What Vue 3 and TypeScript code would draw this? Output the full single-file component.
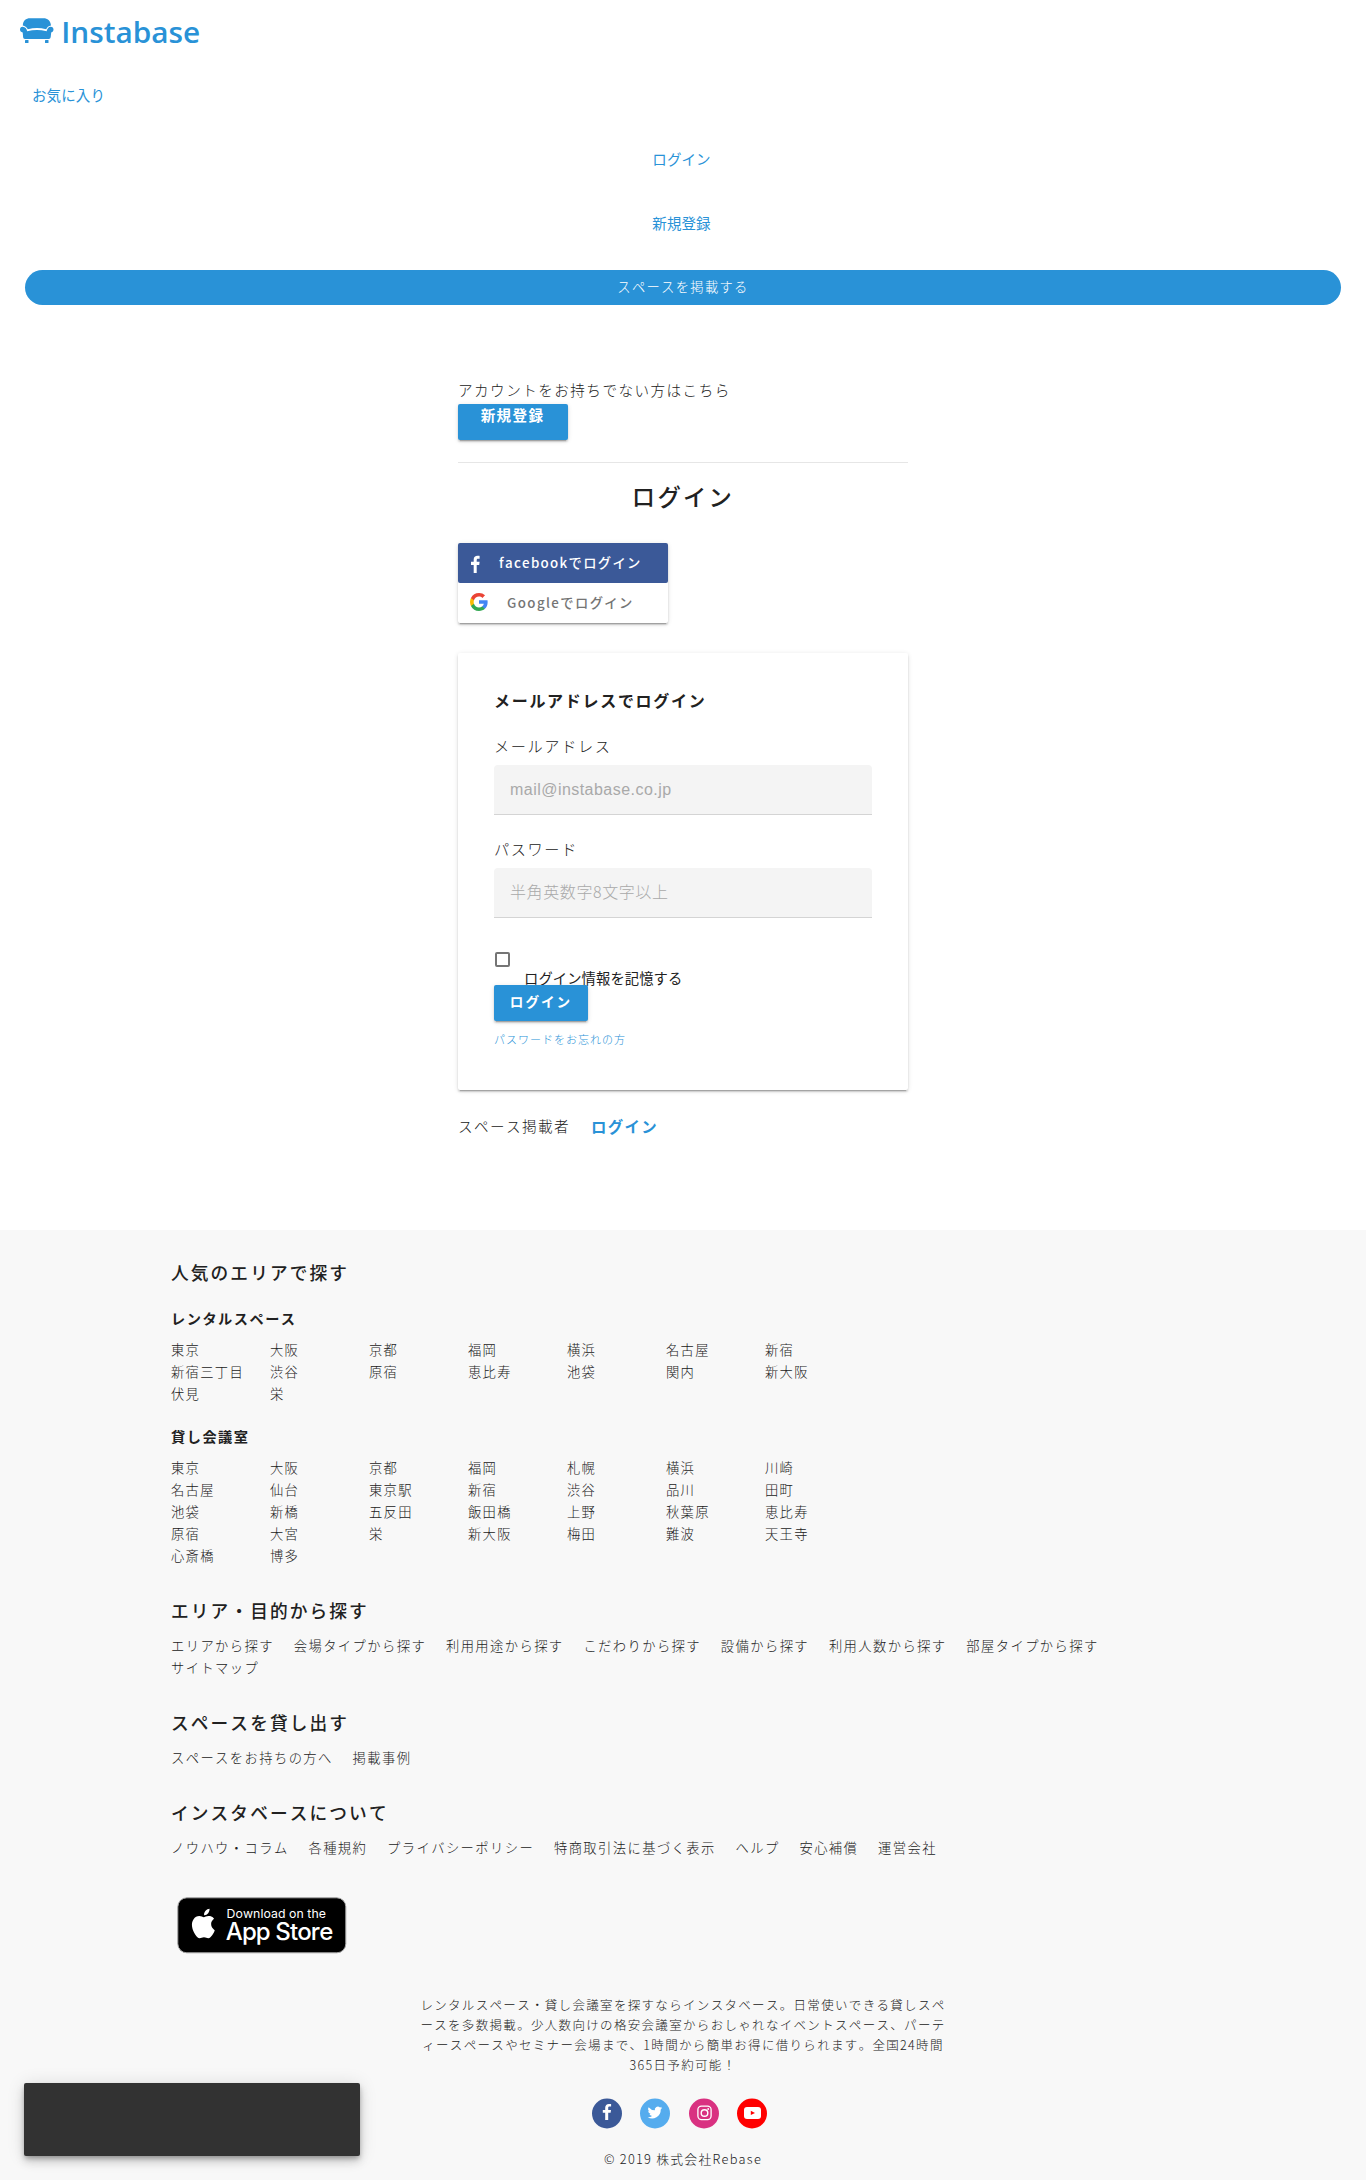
<script setup lang="ts">
interface AreaGroup { title: string; areas: string[] }
interface LinkGroup { title: string; links: string[] }

const areaGroups: AreaGroup[] = [
  {
    title: 'レンタルスペース',
    areas: ['東京', '大阪', '京都', '福岡', '横浜', '名古屋', '新宿', '新宿三丁目', '渋谷', '原宿', '恵比寿', '池袋', '関内', '新大阪', '伏見', '栄'],
  },
  {
    title: '貸し会議室',
    areas: ['東京', '大阪', '京都', '福岡', '札幌', '横浜', '川崎', '名古屋', '仙台', '東京駅', '新宿', '渋谷', '品川', '田町', '池袋', '新橋', '五反田', '飯田橋', '上野', '秋葉原', '恵比寿', '原宿', '大宮', '栄', '新大阪', '梅田', '難波', '天王寺', '心斎橋', '博多'],
  },
]

const linkGroups: LinkGroup[] = [
  {
    title: 'エリア・目的から探す',
    links: ['エリアから探す', '会場タイプから探す', '利用用途から探す', 'こだわりから探す', '設備から探す', '利用人数から探す', '部屋タイプから探す', 'サイトマップ'],
  },
  { title: 'スペースを貸し出す', links: ['スペースをお持ちの方へ', '掲載事例'] },
  {
    title: 'インスタベースについて',
    links: ['ノウハウ・コラム', '各種規約', 'プライバシーポリシー', '特商取引法に基づく表示', 'ヘルプ', '安心補償', '運営会社'],
  },
]

const descLines: string[] = [
  'レンタルスペース・貸し会議室を探すならインスタベース。日常使いできる貸しスペ',
  'ースを多数掲載。少人数向けの格安会議室からおしゃれなイベントスペース、パーテ',
  'ィースペースやセミナー会場まで、1時間から簡単お得に借りられます。全国24時間',
  '365日予約可能！',
]
</script>

<template>
  <div class="page">
    <header class="header">
      <a class="logo">
        <svg width="220" height="62" viewBox="0 0 220 62">
          <g fill="#2992d7">
            <path d="M22.800 25.500C23 20.500 26 18.300 30 18.300H43.500C47.500 18.300 50.500 20.500 51 25.500C48.500 26 47 27.300 46.200 29.200Q37 27 27.800 29.200C26.500 27 25 25.800 22.800 25.500Z" />
            <path d="M22.600 26.700C25.300 27 26.600 28.500 27.200 31.200Q37 28.800 46.600 31.200C47.200 28.500 48.600 26.700 50.700 26.700C52.500 26.700 53.500 28.100 53.500 29.500C53.500 31 52.600 32.100 51.200 32.400L50.700 37C50.500 38.200 49.900 38.900 48.800 38.900H25C23.800 38.900 23.200 38.200 23.100 37L22.700 32.400C21 32.100 20 31 20 29.500C20 28 21 26.700 22.600 26.700Z" />
            <rect x="25" y="40" width="3.500" height="3" rx=".5" />
            <rect x="45" y="40" width="3.500" height="3" rx=".5" />
          </g>
          <text x="61.200" y="42.500" class="logo-text" textLength="139" lengthAdjust="spacingAndGlyphs">Instabase</text>
        </svg>
      </a>
      <nav class="nav">
        <a class="nav-link fav">お気に入り</a>
        <a class="nav-link">ログイン</a>
        <a class="nav-link">新規登録</a>
      </nav>
      <a class="post-space">スペースを掲載する</a>
    </header>

    <main class="main">
      <p class="lead">アカウントをお持ちでない方はこちら</p>
      <a class="btn signup">新規登録</a>
      <hr class="rule" />
      <h1 class="title">ログイン</h1>
      <div class="social-login">
        <a class="social fb">
          <svg class="social-icon" width="24" height="24" viewBox="0 0 24 24">
            <path fill="#fff" d="M9.700 22v-8H7v-3.200h2.700V8.500C9.700 6 11.300 4.800 13.500 4.800c1 0 1.900.1 2.100.1v2.800h-1.500c-1.200 0-1.400.6-1.400 1.500v1.600h2.900L15.200 14h-2.500v8z" />
          </svg>
          <span class="fb-text">facebookでログイン</span>
        </a>
        <a class="social google">
          <svg class="social-icon" width="18" height="18" viewBox="0 0 18 18">
            <path fill="#4285f4" d="M17.640 9.200c0-.64-.06-1.250-.16-1.840H9v3.480h4.840a4.140 4.140 0 0 1-1.800 2.720v2.260h2.920c1.700-1.570 2.680-3.880 2.680-6.620z" />
            <path fill="#34a853" d="M9 18c2.430 0 4.470-.8 5.960-2.180l-2.920-2.260c-.8.540-1.840.86-3.040.86-2.340 0-4.330-1.580-5.040-3.710H.96v2.330A9 9 0 0 0 9 18z" />
            <path fill="#fbbc05" d="M3.960 10.710A5.410 5.410 0 0 1 3.680 9c0-.6.1-1.170.28-1.710V4.960H.96A9 9 0 0 0 0 9c0 1.450.35 2.820.96 4.040z" />
            <path fill="#ea4335" d="M9 3.580c1.320 0 2.500.45 3.440 1.350l2.580-2.590A8.650 8.650 0 0 0 9 0 9 9 0 0 0 .96 4.960l3 2.330C4.670 5.160 6.660 3.580 9 3.580z" />
          </svg>
          <span class="google-text">Googleでログイン</span>
        </a>
      </div>

      <form class="card">
        <h2 class="card-title">メールアドレスでログイン</h2>
        <label class="label">メールアドレス</label>
        <input class="input mail" type="text" placeholder="mail@instabase.co.jp" />
        <label class="label second">パスワード</label>
        <input class="input" type="text" placeholder="半角英数字8文字以上" />
        <div class="remember">
          <span class="checkbox"></span>
          <span class="remember-text">ログイン情報を記憶する</span>
        </div>
        <a class="btn login">ログイン</a>
        <a class="forgot">パスワードをお忘れの方</a>
      </form>

      <p class="owner"><span>スペース掲載者</span><a>ログイン</a></p>
    </main>

    <footer class="footer">
      <div class="footer-inner">
        <h3 class="f-title">人気のエリアで探す</h3>
        <section v-for="g in areaGroups" :key="g.title" class="area-group">
          <h4 class="f-sub">{{ g.title }}</h4>
          <ul class="areas">
            <li v-for="(a, i) in g.areas" :key="i">{{ a }}</li>
          </ul>
        </section>
        <section v-for="g in linkGroups" :key="g.title" class="link-group">
          <h3 class="f-title">{{ g.title }}</h3>
          <ul class="links">
            <li v-for="l in g.links" :key="l">{{ l }}</li>
          </ul>
        </section>
        <svg class="badge" width="170" height="57" viewBox="0 0 170 57">
          <rect x=".8" y=".8" width="168" height="55" rx="9" fill="#000" stroke="#a6a6a6" />
          <g fill="#fff" transform="translate(10.600 10.600) scale(1.300)">
            <path d="M20.900 17.700c-.5 1.300-1.200 2.500-2 3.600-.9 1.200-1.700 2.200-3 2.200-1.200 0-1.800-.7-3.300-.7s-2.100.7-3.300.7c-1.300 0-2.300-1.200-3.200-2.500C3.500 17.200 2.200 12 4.600 8.900c1-1.500 2.700-2.400 4.400-2.400 1.400 0 2.700.9 3.500.9.700 0 2.300-1.100 4-.9.700 0 2.700.3 3.900 2.100-.1.100-2.300 1.400-2.300 4.100 0 3.300 2.800 4.500 2.800 5zM15.800 4.300c-.8.900-1.900 1.600-3.100 1.500-.2-1.200.4-2.500 1.100-3.300.8-.9 2.100-1.600 3.100-1.600.1 1.200-.4 2.500-1.100 3.400z" />
          </g>
          <text x="49.500" y="21" fill="#fff" class="badge-small" textLength="99.500">Download on the</text>
          <text x="48.800" y="43.300" fill="#fff" class="badge-big" textLength="107.500">App Store</text>
        </svg>
      </div>

      <p class="desc"><span v-for="d in descLines" :key="d">{{ d }}</span></p>

      <div class="sns">
        <svg width="30" height="31" viewBox="-1 0 30 31">
          <circle cx="14" cy="15.500" r="15" fill="#3b5998" />
          <path fill="#fff" d="M12.200 22v-7.200H9.800v-2.900h2.400V9.800c0-2.600 1.500-3.900 3.700-3.900h2.200v2.700h-1.500c-1.200 0-1.400.6-1.400 1.400v1.900h2.800l-.4 2.900h-2.400V22z" />
        </svg>
        <svg width="30" height="31" viewBox="-1 0 30 31">
          <circle cx="14" cy="15.500" r="15" fill="#55acee" />
          <path fill="#fff" transform="translate(6.600 7.600) scale(.61)" d="M24 3.900a10 10 0 0 1-2.800.8 5 5 0 0 0 2.200-2.700c-1 .6-2 1-3.100 1.200a4.900 4.900 0 0 0-8.400 4.500A14 14 0 0 1 1.700 2.500a4.900 4.900 0 0 0 1.500 6.600A4.900 4.900 0 0 1 1 8.500a4.900 4.900 0 0 0 3.900 4.900 5 5 0 0 1-2.200.1 4.900 4.900 0 0 0 4.600 3.400A9.900 9.900 0 0 1 0 18.900a14 14 0 0 0 21.500-12.400A10 10 0 0 0 24 3.900z" />
        </svg>
        <svg width="30" height="31" viewBox="-1 0 30 31">
          <circle cx="14" cy="15.500" r="15" fill="#d93181" />
          <rect x="7.900" y="8.200" width="13.200" height="13.400" rx="3.500" fill="none" stroke="#fff" stroke-width="1.300" />
          <circle cx="14.500" cy="15" r="3.300" fill="none" stroke="#fff" stroke-width="1.400" />
          <circle cx="18.200" cy="11" r=".9" fill="#fff" />
        </svg>
        <svg width="30" height="31" viewBox="-1 0 30 31">
          <circle cx="14" cy="15.500" r="15" fill="#f00" />
          <rect x="6" y="9" width="17" height="12" rx="3" fill="#fff" />
          <path fill="#f00" d="M12.800 12.700v4.400l4.200-2.200z" />
        </svg>
      </div>
      <p class="copy">© 2019 株式会社Rebase</p>
    </footer>

    <div class="toast"></div>
  </div>
</template>

<style>
body {
  background: #fff;
}
</style>

<style scoped>
.page {
  position: relative;
  height: 2180px;
  overflow: hidden;
  color: #212121;
  font-family: "Noto Sans CJK JP", "Liberation Sans", sans-serif;
  font-weight: 300;
  font-size: 13.3px;
  letter-spacing: 1.3px;
  font-kerning: none;
}
h1, h2, h3, h4, p, ul {
  margin: 0;
  padding: 0;
}
li {
  list-style: none;
  white-space: nowrap;
}
.header {
  height: 305px;
}
.logo, .logo svg {
  display: block;
}
.logo {
  height: 64px;
}
.logo-text {
  font-family: "Open Sans", sans-serif;
  font-size: 29.500px;
  font-weight: 600;
  letter-spacing: 0;
  fill: #2992d7;
}
.nav {
  display: flex;
  flex-direction: column;
  align-items: center;
}
.nav-link {
  height: 64px;
  line-height: 62px;
  font-size: 14.5px;
  letter-spacing: 0.1px;
  font-weight: 400;
  color: #2992d7;
  margin-right: 3px;
}
.nav-link.fav {
  align-self: flex-start;
  margin-left: 32px;
}
.post-space {
  display: block;
  height: 35px;
  margin: 14px 25px 0;
  border-radius: 18px;
  background: #2992d7;
  color: #fff;
  text-align: center;
  line-height: 33px;
}
.main {
  width: 450px;
  height: 849px;
  margin: 0 auto;
  padding-top: 76px;
  box-sizing: content-box;
}
.lead {
  height: 23px;
  line-height: 18px;
  font-size: 14.6px;
  letter-spacing: 1.45px;
}
.btn {
  display: block;
  border-radius: 2px;
  background: #2992d7;
  color: #fff;
  font-weight: 700;
  text-align: center;
  box-shadow: 0 2px 2px rgba(0, 0, 0, 0.14), 0 3px 1px -2px rgba(0, 0, 0, 0.2), 0 1px 5px rgba(0, 0, 0, 0.12);
}
.signup {
  width: 110px;
  height: 36px;
  padding-right: 1px;
  box-sizing: border-box;
  line-height: 22px;
  font-size: 14.6px;
}
.rule {
  height: 1px;
  margin: 22px 0 0;
  border: 0;
  background: #e6e6e6;
}
.title {
  height: 80px;
  line-height: 66px;
  font-size: 23.3px;
  font-weight: 500;
  letter-spacing: 2.3px;
  text-align: center;
}
.social-login {
  width: 210px;
  border-radius: 2px;
  box-shadow: 0 2px 2px rgba(0, 0, 0, 0.16), 0 3px 1px -2px rgba(0, 0, 0, 0.2), 0 1px 5px rgba(0, 0, 0, 0.12);
}
.social {
  display: flex;
  align-items: center;
  height: 40px;
  font-size: 13.3px;
  font-weight: 500;
}
.social span {
  margin-top: -2px;
}
.fb {
  border-radius: 2px;
  background: #3b5998;
  color: #fff;
}
.fb .social-icon {
  margin: 0 0 0 6px;
}
.fb-text {
  margin-left: 11px;
  letter-spacing: 1.32px;
  white-space: nowrap;
}
.google {
  color: #757575;
}
.google .social-icon {
  margin: -3px 0 0 12px;
}
.google-text {
  margin-left: 19px;
  letter-spacing: 1.4px;
}
.card {
  height: 437px;
  margin-top: 30px;
  padding: 35px 36px 0;
  border-radius: 2px;
  box-sizing: border-box;
  box-shadow: 0 2px 2px rgba(0, 0, 0, 0.14), 0 3px 1px -2px rgba(0, 0, 0, 0.2), 0 1px 5px rgba(0, 0, 0, 0.12);
}
.card-title {
  height: 48px;
  line-height: 24px;
  font-size: 16px;
  font-weight: 700;
  letter-spacing: 1.7px;
}
.label {
  display: block;
  height: 29px;
  line-height: 19px;
  font-size: 15.2px;
  letter-spacing: 1.6px;
}
.label.second {
  margin-top: 24px;
}
.input {
  display: block;
  width: 378px;
  height: 50px;
  padding: 0 16px 3px;
  box-sizing: border-box;
  border: 0;
  border-bottom: 1px solid #d4d4d4;
  border-radius: 4px 4px 0 0;
  background: #f4f4f4;
  font-family: "Noto Sans CJK JP", sans-serif;
  font-size: 16px;
  font-weight: 300;
  letter-spacing: 0.6px;
}
.input.mail {
  padding-bottom: 0;
  font-family: "Liberation Sans", sans-serif;
  letter-spacing: 0.46px;
}
.input::placeholder {
  color: #a9a9a9;
  opacity: 1;
}
.remember {
  display: flex;
  align-items: flex-start;
  height: 67px;
  padding-top: 34px;
  box-sizing: border-box;
}
.checkbox {
  width: 15px;
  height: 15px;
  margin-left: 1px;
  box-sizing: border-box;
  border: 2px solid #757575;
  border-radius: 2px;
}
.remember-text {
  margin: 16px 0 0 14px;
  line-height: 20px;
  font-size: 14.3px;
  font-weight: 400;
  letter-spacing: 0.1px;
  white-space: nowrap;
}
.login {
  position: relative;
  width: 94px;
  height: 36px;
  line-height: 33px;
  font-size: 13.6px;
  letter-spacing: 2px;
}
.forgot {
  display: block;
  margin-top: 8px;
  line-height: 20px;
  font-size: 11px;
  letter-spacing: 1px;
  color: #2992d7;
}
.owner {
  display: flex;
  gap: 21px;
  margin-top: 25px;
  line-height: 22px;
  font-size: 14.6px;
  letter-spacing: 1.4px;
}
.owner a {
  font-size: 15.4px;
  font-weight: 700;
  color: #2992d7;
}
.footer {
  height: 950px;
  background: #f8f8f8;
}
.footer-inner {
  width: 1024px;
  height: 743px;
  margin: 0 auto;
  padding-top: 26px;
  box-sizing: border-box;
}
.f-title {
  height: 34px;
  line-height: 33px;
  font-size: 17.7px;
  font-weight: 500;
  letter-spacing: 2.1px;
}
.f-sub {
  height: 26px;
  line-height: 24px;
  font-size: 14.2px;
  font-weight: 700;
  letter-spacing: 1.5px;
}
.area-group {
  margin-top: 16px;
}
.area-group + .area-group {
  margin-top: 19px;
}
.areas {
  display: grid;
  grid-template-columns: repeat(7, 99px);
  padding-top: 7px;
  line-height: 22px;
}
.link-group {
  padding-top: 27px;
}
.links {
  display: flex;
  flex-wrap: wrap;
  column-gap: 19.800px;
  width: 960px;
  padding-top: 7px;
  line-height: 22px;
  letter-spacing: 1.41px;
}
.badge {
  display: block;
  margin: 38px 0 0 6px;
}
.badge-small, .badge-big {
  font-family: Inter, sans-serif;
  letter-spacing: 0;
}
.badge-small {
  font-size: 12.3px;
  font-weight: 400;
}
.badge-big {
  font-size: 24px;
  font-weight: 500;
}
.desc {
  display: flex;
  flex-direction: column;
  align-items: center;
  padding-top: 22px;
  height: 102px;
  box-sizing: border-box;
  font-size: 12.5px;
  line-height: 20px;
  letter-spacing: 1.32px;
  white-space: nowrap;
}
.sns {
  display: flex;
  justify-content: center;
  gap: 18.600px;
  margin: 23px 7px 0 0;
}
.copy {
  margin-top: 20px;
  line-height: 20px;
  font-size: 12.8px;
  letter-spacing: 1.25px;
  text-align: center;
}
.toast {
  position: absolute;
  left: 24px;
  bottom: 24px;
  width: 336px;
  height: 73px;
  border-radius: 2px;
  background: #323232;
  box-shadow: 0 6px 10px rgba(0, 0, 0, 0.14), 0 1px 18px rgba(0, 0, 0, 0.12), 0 3px 5px -1px rgba(0, 0, 0, 0.3);
}
</style>
